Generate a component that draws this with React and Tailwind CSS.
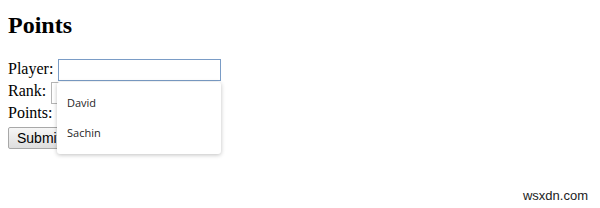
import React from "react";

export default function App() {
  return (
    <div className="relative w-[600px] h-[208px] bg-white overflow-hidden font-['Liberation_Serif',serif] text-black">
      <div className="pl-2 pt-[11px]">
        <h2 className="text-[24px] leading-[28px] font-bold">Points</h2>

        <div className="mt-[19px] relative">
          <div className="flex items-start h-[22px] text-[16px] leading-[22px]">
            <span>Player:</span>
            <input className="ml-[5px] mt-[1px] h-[22px] w-[163px] border border-[#7a9cc6] bg-white outline-none" />
          </div>
          <div className="flex items-start h-[22px] text-[16px] leading-[22px]">
            <span>Rank:</span>
            <input className="ml-[5px] mt-[2px] h-[22px] w-[163px] border border-[#b5b5b5] bg-white outline-none" />
          </div>
          <div className="flex items-start h-[22px] text-[16px] leading-[22px]">
            <span>Points:</span>
            <input className="ml-[5px] mt-[2px] h-[22px] w-[163px] border border-[#b5b5b5] bg-white outline-none" />
          </div>
          <div className="mt-[2px]">
            <button className="h-[22px] px-[8px] border border-[#a8a8a8] rounded-[2px] bg-gradient-to-b from-[#f6f6f6] to-[#dedede] font-['Liberation_Sans',sans-serif] text-[14px] leading-[20px] text-black">
              Submit
            </button>
          </div>

          <div className="absolute left-[49px] top-[24px] w-[164px] h-[72px] bg-white rounded-[3px] shadow-[0_1px_4px_rgba(0,0,0,0.25)] font-['Open_Sans',sans-serif] text-[11px] text-[#1f1f1f] pt-[13px] pl-[10px]">
            <div className="h-[30px] leading-[16px]">David</div>
            <div className="leading-[16px]">Sachin</div>
          </div>
        </div>
      </div>

      <div className="absolute right-[12px] bottom-[3px] font-['Liberation_Sans',sans-serif] text-[13px] text-[#222]">
        wsxdn.com
      </div>
    </div>
  );
}
